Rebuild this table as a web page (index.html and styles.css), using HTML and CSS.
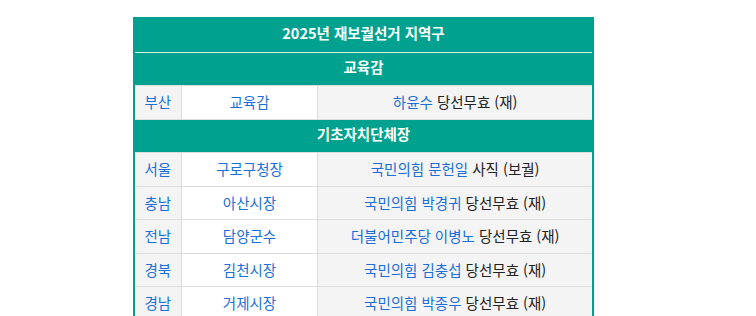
FILE: index.html
```html
<!DOCTYPE html>
<html lang="ko">
<head>
<meta charset="utf-8">
<link rel="stylesheet" href="styles.css">
</head>
<body>
<div class="wrap">
<table class="elect">
<colgroup><col class="c1"><col class="c2"><col class="c3"></colgroup>
<tr><th colspan="3" class="title">2025년 재보궐선거 지역구</th></tr>
<tr><th colspan="3" class="sec">교육감</th></tr>
<tr><td class="reg">부산</td><td class="pos">교육감</td><td class="res"><span class="b">하윤수</span> 당선무효 (재)</td></tr>
<tr><th colspan="3" class="sec">기초자치단체장</th></tr>
<tr><td class="reg">서울</td><td class="pos">구로구청장</td><td class="res"><span class="b">국민의힘 문헌일</span> 사직 (보궐)</td></tr>
<tr><td class="reg">충남</td><td class="pos">아산시장</td><td class="res"><span class="b">국민의힘 박경귀</span> 당선무효 (재)</td></tr>
<tr><td class="reg">전남</td><td class="pos">담양군수</td><td class="res"><span class="b">더불어민주당 이병노</span> 당선무효 (재)</td></tr>
<tr><td class="reg">경북</td><td class="pos">김천시장</td><td class="res"><span class="b">국민의힘 김충섭</span> 당선무효 (재)</td></tr>
<tr><td class="reg">경남</td><td class="pos">거제시장</td><td class="res"><span class="b">국민의힘 박종우</span> 당선무효 (재)</td></tr>
</table>
</div>
</body>
</html>
```
FILE: styles.css
```css
body {
  margin: 0;
  background: #fff;
  font-family: "Noto Sans CJK KR", "Noto Sans", sans-serif;
  font-size: 14.5px;
  color: #222;
}
.wrap {
  padding: 17px 0 0 133px;
}
.elect {
  width: 461px;
  table-layout: fixed;
  border-collapse: collapse;
  border: 2px solid #00a28f;
}
.c1 { width: 47px; }
.c2 { width: 136px; }
.c3 { width: 274px; }
.elect th,
.elect td {
  height: 33.5px;
  padding: 0;
  line-height: 20px;
  text-align: center;
  box-sizing: border-box;
}
.elect th {
  background: #00a28f;
  color: #fff;
  font-weight: 700;
  padding-bottom: 3px;
}
.elect .title {
  border-bottom: 1px solid #d6f0ec;
  height: 34px;
  padding-bottom: 4px;
}
.elect td {
  border: 1px solid #dddddd;
  color: #1a6fd8;
}
.elect .reg { background: #f4f4f4; }
.elect .pos { background: #fff; }
.elect .res { background: #f4f4f4; color: #222; }
.elect .res .b { color: #1a6fd8; }
```
